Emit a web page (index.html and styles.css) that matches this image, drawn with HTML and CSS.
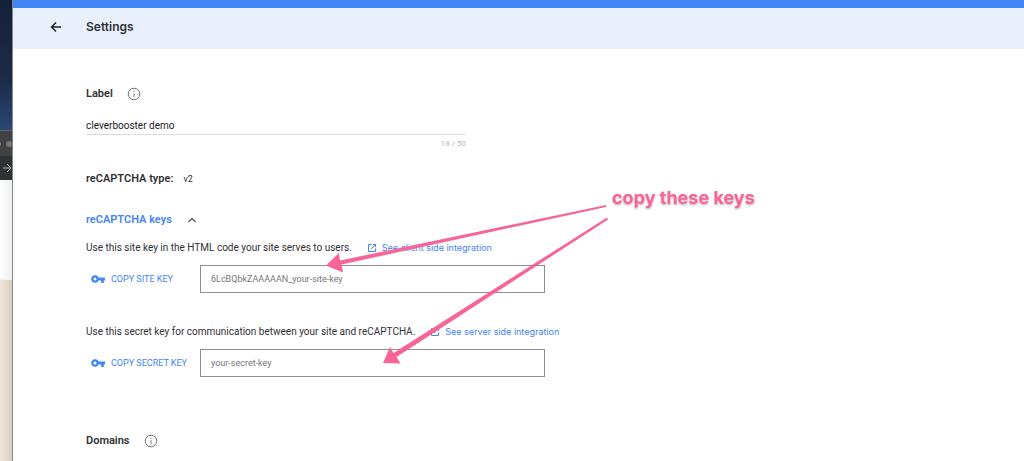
FILE: index.html
```html
<!DOCTYPE html>
<html lang="en">
<head>
  <meta charset="UTF-8">
  <title>Settings - reCAPTCHA</title>
  <link rel="stylesheet" href="styles.css">
</head>
<body>
  <!-- windows behind the browser -->
  <div class="desktop">
    <div class="wallpaper"></div>
    <div class="back-tabs"><span></span><span></span></div>
    <div class="back-toolbar">
      <svg width="12" height="12" viewBox="0 0 12 12"><path d="M3 6h8M7 2l4 4-4 4" /></svg>
    </div>
    <div class="back-page"></div>
    <div class="back-content"></div>
  </div>

  <div class="window">
    <header class="header">
      <a href="#" class="back" aria-label="Back">
        <svg width="12" height="12" viewBox="0 0 12 12"><path d="M11 6H2M6 1.500L1.500 6 6 10.500" /></svg>
      </a>
      <h1>Settings</h1>
    </header>

    <main class="settings">
      <div class="title-row">
        <label for="label" class="title">Label</label>
        <svg class="info" width="14" height="14" viewBox="0 0 14 14"><circle cx="7" cy="7" r="5.800" /><path d="M7 6.200v4M7 3.800v1.200" /></svg>
      </div>
      <div class="label-field">
        <input type="text" id="label" value="cleverbooster demo" maxlength="50">
        <span class="count">18 / 50</span>
      </div>

      <div class="title-row type">
        <h2 class="title">reCAPTCHA type:</h2>
        <span class="version">v2</span>
      </div>

      <button type="button" class="toggle">
        reCAPTCHA keys
        <svg width="10" height="10" viewBox="0 0 10 10"><path d="M1.500 7L5 3.500 8.500 7" /></svg>
      </button>

      <section class="key">
        <div class="hint">
          <label for="site-key">Use this site key in the HTML code your site serves to users.</label>
          <a href="#">
            <svg width="10" height="10" viewBox="0 0 10 10"><path d="M4.500 1.500h-3v7h7v-3M6 1.500h2.500V4M8.500 1.500L4 6" /></svg>
            See client side integration
          </a>
        </div>
        <div class="key-row">
          <button type="button" class="copy">
            <svg width="14" height="10" viewBox="0 0 14 10"><path fill-rule="evenodd" d="M7.500 3.600H14v2.800h-1.200V9h-2.600V6.400H7.500a3.800 3.800 0 1 1 0-2.800zM4 3.500a1.500 1.500 0 1 0 0 3 1.500 1.500 0 0 0 0-3z" /></svg>
            COPY SITE KEY
          </button>
          <input type="text" id="site-key" value="6LcBQbkZAAAAAN_your-site-key" readonly>
        </div>
      </section>

      <section class="key">
        <div class="hint">
          <label for="secret-key">Use this secret key for communication between your site and reCAPTCHA.</label>
          <a href="#">
            <svg width="10" height="10" viewBox="0 0 10 10"><path d="M4.500 1.500h-3v7h7v-3M6 1.500h2.500V4M8.500 1.500L4 6" /></svg>
            See server side integration
          </a>
        </div>
        <div class="key-row">
          <button type="button" class="copy">
            <svg width="14" height="10" viewBox="0 0 14 10"><path fill-rule="evenodd" d="M7.500 3.600H14v2.800h-1.200V9h-2.600V6.400H7.500a3.800 3.800 0 1 1 0-2.800zM4 3.500a1.500 1.500 0 1 0 0 3 1.500 1.500 0 0 0 0-3z" /></svg>
            COPY SECRET KEY
          </button>
          <input type="text" id="secret-key" value="your-secret-key" readonly>
        </div>
      </section>

      <div class="title-row domains">
        <h2 class="title">Domains</h2>
        <svg class="info" width="14" height="14" viewBox="0 0 14 14"><circle cx="7" cy="7" r="5.800" /><path d="M7 6.200v4M7 3.800v1.200" /></svg>
      </div>
    </main>
  </div>

  <!-- annotation on top of the page -->
  <svg class="arrows" width="620" height="380" viewBox="0 0 620 380">
    <path d="M606 205L340 260.500 339 253 326 265.500 343 272.500 341.500 264.500 606 207z" />
    <path d="M607 217.500L393.500 353 390 347 383 363 400.500 363.500 396.500 357 608 219.500z" />
  </svg>
  <p class="note">copy these keys</p>
</body>
</html>
```
FILE: styles.css
```css
* {
  box-sizing: border-box;
}

body {
  position: relative;
  display: flex;
  min-height: 100vh;
  margin: 0;
  overflow: hidden;
  font-family: Roboto, "Liberation Sans", sans-serif;
  font-size: 10px;
  line-height: 16px;
  color: #303134;
  background: #fff;
}

h1, h2, p {
  margin: 0;
}

svg {
  flex: none;
  fill: none;
  stroke: currentColor;
}

a {
  color: #4285f4;
  text-decoration: none;
}

button {
  display: flex;
  align-items: center;
  padding: 0;
  border: 0;
  background: none;
  font: inherit;
  color: #4285f4;
  cursor: pointer;
}

input {
  font: inherit;
  border-radius: 0;
  outline: 0;
}

.desktop {
  display: flex;
  flex-direction: column;
  flex: 0 0 13px;
  overflow: hidden;
  border-right: 1px solid #858983;
}

.wallpaper {
  height: 130px;
  background: linear-gradient(#14213a, #1b2b47 60%, #2a4674);
}

.back-tabs {
  display: flex;
  justify-content: flex-end;
  align-items: center;
  gap: 5px;
  height: 26px;
  border-top: 1px solid #5b6470;
  background: #404143;
}

.back-tabs span {
  flex: none;
  width: 6px;
  height: 6px;
  border-radius: 50%;
  background: #77787a;
}

.back-toolbar {
  display: flex;
  align-items: center;
  height: 24px;
  background: #303134;
  color: #b4b5b7;
}

.back-page {
  height: 98px;
  background: linear-gradient(90deg, #fff, #eeeff0);
}

.back-content {
  flex: 1;
  border-top: 2px solid #f7f4ee;
  background: linear-gradient(90deg, #eee5d6, #d9d0c1);
}

.window {
  flex: 1;
  min-width: 0;
  border-top: 8px solid #4285f4;
}

.header {
  display: flex;
  align-items: center;
  gap: 24px;
  height: 41px;
  padding: 0 37px 3px;
  background: #e8f0fe;
}

.header h1 {
  font-family: Inter, sans-serif;
  font-size: 12px;
  font-weight: 600;
}

.back {
  display: flex;
  color: #202124;
}

.back svg {
  stroke-width: 1.5;
}

.settings {
  padding: 37px 16px 12px 73px;
}

.title-row {
  display: flex;
  align-items: center;
  gap: 14px;
}

.title {
  font-size: 11px;
  font-weight: 600;
}

.info {
  color: #77797c;
}

.label-field {
  display: flex;
  flex-direction: column;
  max-width: 380px;
  margin-top: 15px;
}

.label-field input {
  height: 18px;
  padding: 0;
  border: 0;
  border-bottom: 1px solid #dcdcdc;
  color: #202124;
}

.count {
  align-self: flex-end;
  margin-top: 1px;
  font-size: 8px;
  color: #b8b8b8;
}

.type {
  gap: 10px;
  margin-top: 19px;
}

.version {
  font-size: 9px;
}

.toggle {
  gap: 15px;
  margin-top: 25px;
  font-size: 11px;
  font-weight: 600;
}

.toggle svg {
  color: #5f6368;
  stroke-width: 1.5;
}

.key {
  margin: 12px 0 31px;
}

.hint,
.hint a {
  display: flex;
  align-items: center;
}

.hint {
  gap: 15px;
}

.hint a {
  gap: 5px;
  font-family: Inter, sans-serif;
  font-size: 9px;
}

.key-row {
  display: flex;
  align-items: center;
  max-width: 459px;
  margin-top: 9px;
}

.copy {
  flex: 0 0 114px;
  gap: 6px;
  padding-left: 5px;
  font-size: 9px;
}

.copy svg {
  fill: currentColor;
  stroke: none;
}

.key-row input {
  flex: 1;
  min-width: 0;
  height: 28px;
  padding: 0 10px;
  border: 1px solid #8e8e8e;
  font-size: 9px;
  color: #777;
}

.domains {
  margin-top: 56px;
}

.arrows {
  position: absolute;
  top: 0;
  left: 0;
  fill: #f76496;
  stroke: none;
  pointer-events: none;
}

.note {
  position: absolute;
  top: 186px;
  left: 612px;
  font-family: Inter, sans-serif;
  font-size: 18px;
  font-weight: 700;
  line-height: 24px;
  color: #f76496;
  text-shadow: 0 0 2px #fff, 0 1px 2px #9a9a9a;
}
```
